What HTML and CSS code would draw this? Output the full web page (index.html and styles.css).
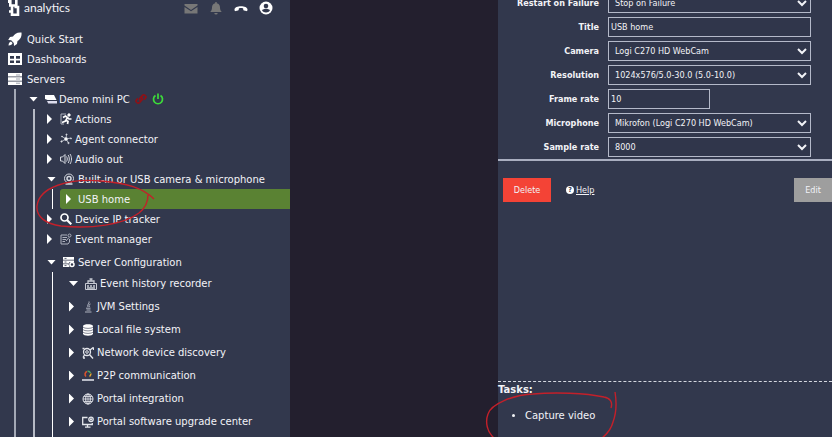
FILE: index.html
```html
<!DOCTYPE html>
<html lang="en">
<head>
    <meta charset="UTF-8">
    <meta name="viewport" content="width=device-width, initial-scale=1.0">
    <title>B analytics</title>
    <link rel="stylesheet" href="styles.css">
</head>
<body>
    <div class="app">
        <nav class="sidebar">
            <header class="topbar">
                <svg class="logo" viewBox="0 0 12 18" fill="none" stroke="#fff" stroke-width="2.600">
                    <path d="M2.300 0v6.500h6V0M4 6.500v9.200h6V8H6.500" />
                    <path d="M1 12.500h4M1 0v4" />
                </svg>
                <span class="brand">analytics</span>
                <div class="top-icons">
                    <button aria-label="Messages"><svg viewBox="0 0 14 14"><g fill="#777"><path d="M.500 3h13v1.500L7 9 .500 4.500z" /><path d="M.500 6 7 10.200 13.500 6v6.500H.500z" /></g></svg></button>
                    <button aria-label="Alerts"><svg viewBox="0 0 14 14" fill="#777"><path d="M6.300 1h1.400v1.200C10 2.600 11 4.300 11 6.500c0 2.500.800 3.300 1.800 4.500H1.200C2.200 9.800 3 9 3 6.500c0-2.200 1-3.900 3.300-4.300zM5.300 12h3.400a1.700 1.500 0 0 1-3.400 0z" /></svg></button>
                    <button aria-label="Call"><svg viewBox="0 0 14 14" fill="#fff"><path d="M.500 8.500C.500 4 13.500 4 13.500 8.500c0 1-.400 1.800-1.300 1.600l-2.200-.500c-.800-.200-.800-1.700-.800-2.200-1.400-.500-3-.500-4.400 0 0 .500 0 2-.800 2.200l-2.200.500C.900 10.300.500 9.500.500 8.500z" /></svg></button>
                    <button aria-label="Account"><svg viewBox="0 0 14 14"><circle cx="7" cy="7" r="6.500" fill="#fff" /><circle cx="7" cy="5" r="2.300" fill="#32384d" /><path d="M3 9.200c2-2 6-2 8 0-1.500 3-6.500 3-8 0z" fill="#32384d" /></svg></button>
                </div>
            </header>

            <ul class="menu">
                <li><div class="row">
                    <svg class="menu-icon" viewBox="0 0 14 14" fill="#fff"><path d="M13.500.500C9 0 6.500 2 5 4.500L2 5 .200 8l3 .300L5.800 11l.200 3 3-2 .500-3C12 7.500 14 5 13.500.500zM3 9.500C1.500 9.800.800 11 .500 13.500 3 13.200 4.200 12.500 4.500 11z" /></svg>
                    <a href="#">Quick Start</a>
                </div></li>
                <li><div class="row">
                    <svg class="menu-icon" viewBox="0 0 14 14" fill="#fff"><path fill-rule="evenodd" d="M0 1h14v12H0zM2 4v2.700h4V4zm6 0v2.700h4V4zM2 8.500V11h4V8.500zm6 0V11h4V8.500z" /></svg>
                    <a href="#">Dashboards</a>
                </div></li>
                <li><div class="row">
                    <svg class="menu-icon" viewBox="0 0 14 14" fill="#fff"><path d="M0 1h14v3.500H0zM0 5.200h14v3.600H0zM0 9.500h14V13H0z" /><path d="M8 3h4M8 7h4M8 11.200h4" stroke="#888d9c" stroke-width=".8" /></svg>
                    <a href="#">Servers</a>
                </div>
                <ul class="level-1">
                    <li><div class="row">
                        <button class="toggle open" aria-label="Collapse"></button>
                        <svg class="icon server" viewBox="0 0 12 12" fill="#fff"><path d="M0 2h9l2.500 5H2.500L0 6z" /><path d="M2 8h10v2.500H3.200z" fill="#dde" /></svg>
                        <a href="#">Demo mini PC</a>
                        <svg class="icon status" viewBox="0 0 12 12" fill="none" stroke="#8c1218" stroke-width="1.700"><path d="M5.300 7.800a2.200 2.200 0 0 1 0-3l2-2.200a2 2 0 0 1 3 2.800L9 6.700M6.700 4.200a2.200 2.200 0 0 1 0 3l-2 2.200a2 2 0 0 1-3-2.800L3 5.300" /></svg>
                        <svg class="icon" viewBox="0 0 12 12" fill="none" stroke="#3ddc3a" stroke-width="1.700"><path d="M3.500 2.500a4.500 4.500 0 1 0 5 0M6 .500v5.500" /></svg>
                    </div>
                    <ul class="level-2">
                        <li><div class="row">
                            <button class="toggle" aria-label="Expand"></button>
                            <svg class="icon" viewBox="0 0 12 12" fill="none" stroke="#fff"><path d="M6 1H1v10h3" stroke="#aeb2bf" /><circle cx="9" cy="2" r="1.200" fill="#fff" /><path d="M3 4.500 5.500 3l2 1.500L5.500 8 2 9.500M5.500 7 8 8.500 7.500 11M7.500 4.500 9 6h2.500" stroke-width="1.700" /></svg>
                            <a href="#">Actions</a>
                        </div></li>
                        <li><div class="row">
                            <button class="toggle" aria-label="Expand"></button>
                            <svg class="icon" viewBox="0 0 12 12" fill="#fff" stroke="#c8cbd4" stroke-width=".8"><path d="M6 6 6.500 1.500M6 6l5-1M6 6 2 3.500M6 6 1.500 8.500M6 6l2.500 4" /><circle cx="6" cy="6" r="1.600" /><circle cx="6.500" cy="1.500" r=".6" /><circle cx="11" cy="5.500" r=".6" /><circle cx="2" cy="3.500" r=".5" /><circle cx="1.500" cy="8.500" r=".7" /><circle cx="8.500" cy="10" r=".7" /></svg>
                            <a href="#">Agent connector</a>
                        </div></li>
                        <li><div class="row">
                            <button class="toggle" aria-label="Expand"></button>
                            <svg class="icon" viewBox="0 0 12 12" fill="none" stroke="#d5d8e0"><path d="M.500 4h2L5 1.500v9L2.500 8h-2zM6.500 3.500c1 1.500 1 3.500 0 5M8.200 2c1.500 2.500 1.500 5.500 0 8M10 1c2 3 2 7 0 10" /></svg>
                            <a href="#">Audio out</a>
                        </div></li>
                        <li><div class="row">
                            <button class="toggle open" aria-label="Collapse"></button>
                            <svg class="icon" viewBox="0 0 12 12" fill="none" stroke="#d5d8e0"><circle cx="6" cy="5.500" r="4.500" /><circle cx="6" cy="5.500" r="2" stroke-width="1.500" /><path d="M2.500 11h7" stroke-width="1.500" /></svg>
                            <a href="#">Built-in or USB camera &amp; microphone</a>
                        </div>
                        <ul class="level-3">
                            <li><div class="row selected">
                                <button class="toggle" aria-label="Expand"></button>
                                <a href="#">USB home</a>
                            </div></li>
                        </ul></li>
                        <li><div class="row">
                            <button class="toggle" aria-label="Expand"></button>
                            <svg class="icon" viewBox="0 0 12 12" fill="none" stroke="#fff" stroke-width="1.700"><circle cx="4.500" cy="4.500" r="3.500" /><path d="m7 7 4.300 4.300" stroke-width="2.200" /></svg>
                            <a href="#">Device IP tracker</a>
                        </div></li>
                        <li><div class="row">
                            <button class="toggle" aria-label="Expand"></button>
                            <svg class="icon" viewBox="0 0 12 12" fill="none" stroke="#aeb2bf"><path d="M7 2H1v9h7l1.500-2V6M2.500 4.500H7M2.500 6.500H6M2.500 8.500H5" /><circle cx="9.500" cy="2.500" r="1.500" /><path d="m6 8 3-3.500" /></svg>
                            <a href="#">Event manager</a>
                        </div></li>
                        <li><div class="row tall">
                            <button class="toggle open" aria-label="Collapse"></button>
                            <svg class="icon" viewBox="0 0 12 12" fill="#fff"><path d="M0 1h11v2.800H0zM0 4.600h11V6H6.500L5.800 7.400H0zM0 8.200h5.500L6.500 11H0z" /><path d="M1.500 2.400h2M1.500 6h2M1.500 9.600h2" stroke="#32384d" stroke-width=".8" /><circle cx="9" cy="8.500" r="2" fill="none" stroke="#fff" stroke-width="1.500" /></svg>
                            <a href="#">Server Configuration</a>
                        </div>
                        <ul class="level-3 settings">
                            <li><div class="row">
                                <button class="toggle open" aria-label="Collapse"></button>
                                <svg class="icon" viewBox="0 0 12 12" fill="none" stroke="#c8cbd4"><path d="M.500 5.500h11v6H.500z" /><path d="M3 5.500V3h6v2.500M6 3V1M4.500 1h3M2 8h2M5 8h2M8 8h2M2 10h8" stroke-width="1.300" /></svg>
                                <a href="#">Event history recorder</a>
                            </div></li>
                            <li><div class="row">
                                <button class="toggle" aria-label="Expand"></button>
                                <svg class="icon" viewBox="0 0 12 12" fill="none" stroke="#aeb2bf"><path d="M7 .500C8 2.500 4.500 3.500 6 6M8.500 3C7 3.500 6.500 4.500 7.500 6M4 7.200h4.500M4.500 9h4M3 11h6.500" /></svg>
                                <a href="#">JVM Settings</a>
                            </div></li>
                            <li><div class="row">
                                <button class="toggle" aria-label="Expand"></button>
                                <svg class="icon" viewBox="0 0 12 12" fill="#fff"><path d="M1 2.200C1-.300 11-.300 11 2.200v7.600c0 2.500-10 2.500-10 0z" /><path d="M1 3.200c1.500 1.600 8.500 1.600 10 0M1 5.700c1.500 1.600 8.500 1.600 10 0M1 8.200c1.500 1.600 8.500 1.600 10 0" fill="none" stroke="#32384d" stroke-width=".6" /></svg>
                                <a href="#">Local file system</a>
                            </div></li>
                            <li><div class="row">
                                <button class="toggle" aria-label="Expand"></button>
                                <svg class="icon" viewBox="0 0 12 12" fill="none" stroke="#e4e6ec"><circle cx="5" cy="5" r="3.500" stroke-width="1.300" /><circle cx="5" cy="5" r="1.300" /><path d="m7.500 7.500 3.500 4M8 3l2.500-2M2.500 8 1 10.500M.500 1.500h2M10 1h1.500v2M1 11h2" stroke-width="1.400" /></svg>
                                <a href="#">Network device discovery</a>
                            </div></li>
                            <li><div class="row">
                                <button class="toggle" aria-label="Expand"></button>
                                <svg class="icon" viewBox="0 0 12 12" fill="none" stroke-width="1.600"><path d="M4 6.500a3 3 0 0 1 1-5" stroke="#d9532c" /><path d="M5.500 1.300a3 3 0 0 1 3 1.700" stroke="#4aa564" /><path d="M8.800 3.500a3 3 0 0 1-1.300 3" stroke="#e3a72f" /><path d="M0 10h12" stroke="#c8cbd4" stroke-width="1.800" /></svg>
                                <a href="#">P2P communication</a>
                            </div></li>
                            <li><div class="row">
                                <button class="toggle" aria-label="Expand"></button>
                                <svg class="icon" viewBox="0 0 12 12" fill="none" stroke="#e4e6ec"><circle cx="6" cy="6" r="5" /><ellipse cx="6" cy="6" rx="2.300" ry="5" /><path d="M1 6h10M6 1v10M2 3.500h8M2 8.500h8" stroke-width=".8" /></svg>
                                <a href="#">Portal integration</a>
                            </div></li>
                            <li><div class="row">
                                <button class="toggle" aria-label="Expand"></button>
                                <svg class="icon" viewBox="0 0 12 12" fill="none" stroke="#e4e6ec" stroke-width="1.300"><path d="M5.500 1.500H.700v7h9.600V7M5.500 8.500v2.500M3 11.200h5.500" /><circle cx="9" cy="3.300" r="2.200" /><circle cx="9" cy="3.300" r=".5" /></svg>
                                <a href="#">Portal software upgrade center</a>
                            </div></li>
                            <li><div class="row">
                                <button class="toggle" aria-label="Expand"></button>
                                <svg class="icon" viewBox="0 0 12 12" fill="#d5d8e0"><path d="M1 0h10v12H1z" /></svg>
                            </div></li>
                        </ul></li>
                    </ul></li>
                </ul></li>
            </ul>

            <svg class="mark mark-usb" viewBox="0 0 120 50"><path d="M119 21C108 10 92 5 66 3 34 0 4 9 2 28c-1 11 9 18 24 20 30 3 62-1 78-13 5-4 9-10 9-18" /></svg>
        </nav>

        <main class="panel">
            <form class="settings-form">
                <label for="restart">Restart on Failure</label>
                <select id="restart"><option>Stop on Failure</option></select>
                <label for="title">Title</label>
                <input type="text" id="title" value="USB home">
                <label for="camera">Camera</label>
                <select id="camera"><option>Logi C270 HD WebCam</option></select>
                <label for="resolution">Resolution</label>
                <select id="resolution"><option>1024x576/5.0-30.0 (5.0-10.0)</option></select>
                <label for="frame-rate">Frame rate</label>
                <input type="text" id="frame-rate" class="short" value="10">
                <label for="microphone">Microphone</label>
                <select id="microphone"><option>Mikrofon (Logi C270 HD WebCam)</option></select>
                <label for="sample-rate">Sample rate</label>
                <select id="sample-rate"><option>8000</option></select>
            </form>

            <div class="actions">
                <button class="delete">Delete</button>
                <a class="help" href="#"><span class="help-icon">?</span><span class="help-text">Help</span></a>
                <button class="edit">Edit</button>
            </div>

            <section class="tasks">
                <h2>Tasks:</h2>
                <ul>
                    <li>Capture video</li>
                </ul>
                <svg class="mark mark-task" viewBox="0 0 134 48"><path d="M126 18c2-6-1-10-7-11C100 3 70 2 48 4 28 5 6 14 3 24c-3 8-1 18 6 24M130 2c2 12 1 22-2 30-2 8-6 12-11 16" /></svg>
            </section>
        </main>
    </div>
</body>
</html>
```
FILE: styles.css
```css
* {
    box-sizing: border-box;
}

body {
    margin: 0;
    font-family: "DejaVu Sans", Verdana, sans-serif;
    font-size: 10px;
    background-color: #231f2e;
    color: #f2f3f7;
}

a {
    color: inherit;
    text-decoration: none;
}

ul {
    list-style: none;
    margin: 0;
    padding: 0;
}

button {
    border: none;
    padding: 0;
    font-family: inherit;
    cursor: pointer;
}

.app {
    display: grid;
    grid-template-columns: 290fr 208fr 334fr;
    height: 100vh;
    overflow: hidden;
}

/* Sidebar */
.sidebar {
    position: relative;
    background-color: #32384d;
    overflow: hidden;
}

.topbar {
    display: flex;
    align-items: center;
    height: 15px;
    margin-bottom: 14px;
    padding: 0 17px 0 8px;
}

.logo {
    width: 12px;
    height: 18px;
    margin-right: 4px;
}

.brand {
    font-family: Lato, sans-serif;
    font-size: 12px;
}

.top-icons {
    display: flex;
    gap: 11px;
    margin-left: auto;
}

.top-icons button {
    width: 14px;
    height: 14px;
    background: none;
}

.top-icons svg {
    display: block;
}

.row {
    display: flex;
    align-items: center;
    height: 20px;
    white-space: nowrap;
}

.menu > li > .row {
    padding-left: 8px;
}

.menu-icon {
    width: 14px;
    height: 14px;
    margin-right: 5px;
}

.icon {
    width: 12px;
    height: 12px;
    margin-right: 3px;
}

.toggle {
    width: 5px;
    height: 10px;
    margin-right: 8px;
    background-color: #fff;
    clip-path: polygon(0 0, 100% 50%, 0 100%);
}

.toggle.open {
    width: 9px;
    height: 5px;
    margin-right: 7px;
    clip-path: polygon(0 0, 100% 0, 50% 100%);
}

.icon.server {
    margin-right: 2px;
}

.icon.status {
    margin: 0 5px;
}

.level-1 {
    margin-left: 14px;
    border-left: 2px solid #a4a9b6;
}

.level-1 > li > .row {
    padding-left: 13px;
}

.level-2 {
    margin-left: 17px;
    border-left: 2px solid #b6bac5;
}

.level-2 > li > .row {
    padding-left: 12px;
}

.level-3 {
    margin-left: 17px;
    border-left: 1px solid #fff;
}

.row.selected {
    margin-left: 7px;
    padding-left: 6px;
    background-color: #5a8233;
    border-radius: 3px 0 0 3px;
}

.selected .toggle {
    margin-right: 7px;
}

.row.tall,
.settings .row {
    height: 23px;
}

.row.tall {
    padding-top: 3px;
}

.settings .row {
    padding-left: 16px;
}

/* Right panel */
.panel {
    grid-column: 3;
    display: flex;
    flex-direction: column;
    background-color: #32384d;
}

.settings-form {
    display: grid;
    grid-template-columns: 101fr 203fr;
    gap: 4px 9px;
    margin-top: -7px;
    padding: 0 21px 2px 0;
    border-bottom: 2px solid #a9aec0;
    font-family: "DejaVu Sans Condensed", Tahoma, sans-serif;
}

.settings-form label {
    align-self: center;
    font-size: 9px;
    font-weight: bold;
    text-align: right;
}

.settings-form input,
.settings-form select {
    width: 100%;
    height: 20px;
    padding: 0 2px;
    background-color: #30364b;
    border: 1px solid #b4b9c9;
    border-radius: 0;
    color: #f2f3f7;
    font-family: inherit;
    font-size: 9px;
}

.settings-form .short {
    width: 50%;
}

.actions {
    display: flex;
    align-items: center;
    padding: 17px 0 0 5px;
    font-family: "DejaVu Sans Condensed", Tahoma, sans-serif;
}

.actions button {
    height: 24px;
    font-size: 9px;
    color: #f2f3f7;
}

.delete {
    width: 48px;
    background-color: #f44336;
}

.edit {
    width: 38px;
    margin-left: auto;
    background-color: #9e9e9e;
}

.help {
    display: flex;
    align-items: center;
    gap: 2px;
    margin-left: 15px;
    font-size: 9px;
}

.help-icon {
    width: 8px;
    height: 8px;
    border-radius: 50%;
    background-color: #fff;
    color: #32384d;
    font-size: 7px;
    font-weight: bold;
    line-height: 8px;
    text-align: center;
}

.help-text {
    text-decoration: underline;
}

.tasks {
    position: relative;
    height: 56px;
    margin-top: auto;
    border-top: 1px dashed #d5d8e0;
}

.tasks h2 {
    margin: 0;
    font-size: 10px;
    line-height: 16px;
}

.tasks ul {
    list-style: disc;
    margin-top: 10px;
    padding-left: 27px;
    line-height: 16px;
}

/* Hand drawn red marks */
.mark {
    position: absolute;
    fill: none;
    stroke: #c3202a;
    stroke-width: 1.4;
    pointer-events: none;
}

.mark-usb {
    left: 35px;
    top: 178px;
    width: 120px;
    height: 50px;
}

.mark-task {
    left: -13px;
    top: 8px;
    width: 134px;
    height: 48px;
}
```
